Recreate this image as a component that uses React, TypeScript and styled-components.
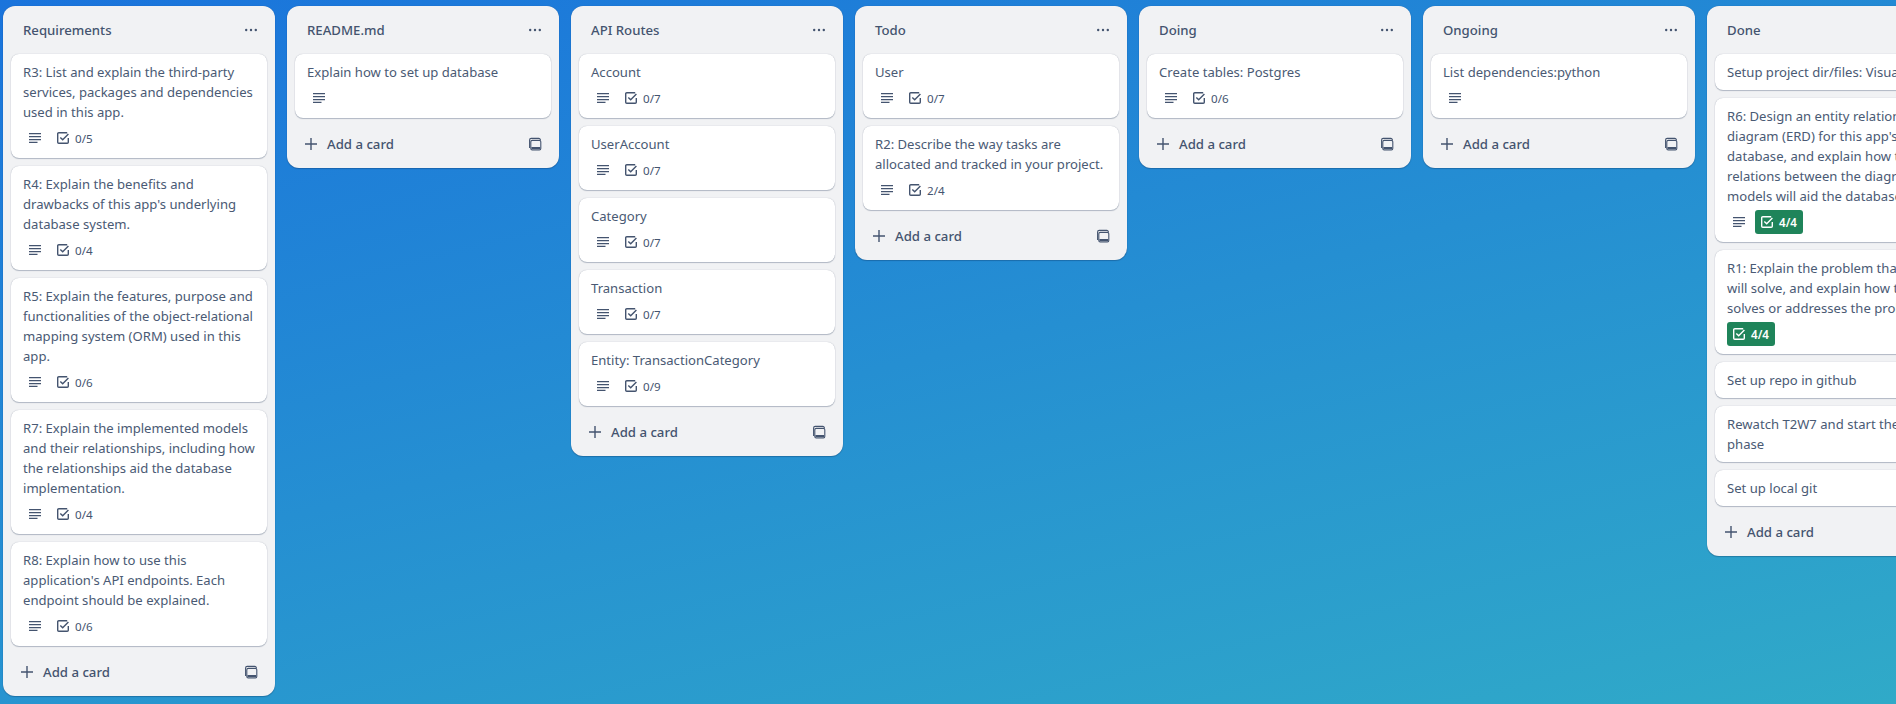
import React from 'react'
import styled, { createGlobalStyle } from 'styled-components'

const GlobalStyle = createGlobalStyle`
  html, body {
    margin: 0;
    height: 100%;
    overflow: hidden;
  }
  body {
    font-family: "Noto Sans", "Open Sans", sans-serif;
    font-size: 14px;
    color: #44546f;
  }
`

type CardData = {
  title: string
  desc?: boolean
  check?: string
}

type ListData = {
  name: string
  cards: CardData[]
}

const lists: ListData[] = [
  {
    name: 'Requirements',
    cards: [
      { title: 'R3: List and explain the third-party services, packages and dependencies used in this app.', desc: true, check: '0/5' },
      { title: "R4: Explain the benefits and drawbacks of this app's underlying database system.", desc: true, check: '0/4' },
      { title: 'R5: Explain the features, purpose and functionalities of the object-relational mapping system (ORM) used in this app.', desc: true, check: '0/6' },
      { title: 'R7: Explain the implemented models and their relationships, including how the relationships aid the database implementation.', desc: true, check: '0/4' },
      { title: "R8: Explain how to use this application's API endpoints. Each endpoint should be explained.", desc: true, check: '0/6' },
    ],
  },
  {
    name: 'README.md',
    cards: [{ title: 'Explain how to set up database', desc: true }],
  },
  {
    name: 'API Routes',
    cards: [
      { title: 'Account', desc: true, check: '0/7' },
      { title: 'UserAccount', desc: true, check: '0/7' },
      { title: 'Category', desc: true, check: '0/7' },
      { title: 'Transaction', desc: true, check: '0/7' },
      { title: 'Entity: TransactionCategory', desc: true, check: '0/9' },
    ],
  },
  {
    name: 'Todo',
    cards: [
      { title: 'User', desc: true, check: '0/7' },
      { title: 'R2: Describe the way tasks are allocated and tracked in your project.', desc: true, check: '2/4' },
    ],
  },
  {
    name: 'Doing',
    cards: [{ title: 'Create tables: Postgres', desc: true, check: '0/6' }],
  },
  {
    name: 'Ongoing',
    cards: [{ title: 'List dependencies:python', desc: true }],
  },
  {
    name: 'Done',
    cards: [
      { title: 'Setup project dir/files: Visual Code' },
      { title: "R6: Design an entity relationship diagram (ERD) for this app's database, and explain how the relations between the diagrammed models will aid the database design.", desc: true, check: '4/4' },
      { title: 'R1: Explain the problem that this app will solve, and explain how this app solves or addresses the problem.', check: '4/4' },
      { title: 'Set up repo in github' },
      { title: 'Rewatch T2W7 and start the coding phase' },
      { title: 'Set up local git' },
    ],
  },
]

const DescIcon = () => (
  <svg width="16" height="16" viewBox="0 0 16 16" fill="none" stroke="currentColor" strokeWidth="1.3">
    <path d="M2 3.6h12M2 6.6h12M2 9.6h12M2 12.4h8.5" />
  </svg>
)

const CheckIcon = () => (
  <svg width="16" height="16" viewBox="0 0 16 16" fill="none" stroke="currentColor" strokeWidth="1.4">
    <path d="M13.3 8v4.2a1.1 1.1 0 0 1-1.1 1.1H3.8a1.1 1.1 0 0 1-1.1-1.1V3.8a1.1 1.1 0 0 1 1.1-1.1h8.4" />
    <path d="M5.3 7.4 7.7 9.8 13.4 4" />
  </svg>
)

const DotsIcon = () => (
  <svg width="16" height="16" viewBox="0 0 16 16" fill="currentColor">
    <circle cx="3.2" cy="8" r="1.2" />
    <circle cx="8" cy="8" r="1.2" />
    <circle cx="12.8" cy="8" r="1.2" />
  </svg>
)

const PlusIcon = () => (
  <svg width="16" height="16" viewBox="0 0 16 16" fill="none" stroke="currentColor" strokeWidth="1.4">
    <path d="M8 2v12M2 8h12" />
  </svg>
)

const TemplateIcon = () => (
  <svg width="16" height="16" viewBox="0 0 16 16" fill="none" stroke="currentColor" strokeWidth="1.1">
    <path d="M2.6 12V4a1.6 1.6 0 0 1 1.6-1.6h7.6A1.6 1.6 0 0 1 13.4 4" />
    <rect x="3.8" y="4.4" width="10" height="9.6" rx="1.4" />
    <rect x="4.4" y="11" width="8.8" height="2.4" fill="currentColor" stroke="none" />
  </svg>
)

export default function App() {
  return (
    <>
      <GlobalStyle />
      <Board>
        {lists.map((list) => (
          <List key={list.name}>
            <ListHeader>
              <ListName>{list.name}</ListName>
              <MenuButton>
                <DotsIcon />
              </MenuButton>
            </ListHeader>
            <Cards>
              {list.cards.map((card) => {
                const complete = card.check === '4/4'
                return (
                  <Card key={card.title}>
                    <CardTitle>{card.title}</CardTitle>
                    {(card.desc || card.check) && (
                      <Badges>
                        {card.desc && (
                          <DescBadge>
                            <DescIcon />
                          </DescBadge>
                        )}
                        {card.check && (
                          <CheckBadge $complete={complete}>
                            <CheckIcon />
                            <span>{card.check}</span>
                          </CheckBadge>
                        )}
                      </Badges>
                    )}
                  </Card>
                )
              })}
            </Cards>
            <ListFooter>
              <AddCard>
                <PlusIcon />
                <span>Add a card</span>
              </AddCard>
              <TemplateButton>
                <TemplateIcon />
              </TemplateButton>
            </ListFooter>
          </List>
        ))}
      </Board>
    </>
  )
}

const Board = styled.div`
  box-sizing: border-box;
  display: flex;
  align-items: flex-start;
  gap: 12px;
  width: 1896px;
  height: 704px;
  padding: 6px 0 0 3px;
  overflow: hidden;
  background: linear-gradient(166deg, #1a74dc 0%, #30aac8 100%);
`

const List = styled.div`
  flex: 0 0 272px;
  width: 272px;
  background: #f1f2f4;
  border-radius: 12px;
  box-shadow: 0 1px 1px #091e4240, 0 0 1px #091e424f;
`

const ListHeader = styled.div`
  box-sizing: border-box;
  display: flex;
  align-items: center;
  justify-content: space-between;
  height: 48px;
  padding: 0 16px 0 20px;
`

const ListName = styled.div`
  font-size: 13.2px;
  font-weight: 500;
  line-height: 20px;
  color: #44546f;
`

const MenuButton = styled.div`
  display: flex;
  color: #44546f;
`

const Cards = styled.div`
  display: flex;
  flex-direction: column;
  gap: 8px;
  padding: 0 8px;
`

const Card = styled.div`
  box-sizing: border-box;
  padding: 8px 12px;
  background: #fff;
  border-radius: 8px;
  box-shadow: 0 1px 1px #091e4240, 0 0 1px #091e424f;
`

const CardTitle = styled.div`
  font-size: 13.1px;
  line-height: 20px;
  color: #4a5a74;
`

const Badges = styled.div`
  display: flex;
  gap: 4px;
  margin-top: 4px;
  height: 24px;
`

const DescBadge = styled.div`
  display: flex;
  align-items: center;
  justify-content: center;
  width: 24px;
  height: 24px;
  color: #44546f;
`

const CheckBadge = styled.div<{ $complete?: boolean }>`
  display: flex;
  align-items: center;
  height: 24px;
  padding: 0 4px;
  border-radius: 3px;
  font-size: 11.6px;
  font-weight: ${(p) => (p.$complete ? 600 : 400)};
  color: ${(p) => (p.$complete ? '#fff' : '#44546f')};
  background: ${(p) => (p.$complete ? '#1f845a' : 'transparent')};

  span {
    padding: 0 2px 0 4px;
  }
`

const ListFooter = styled.div`
  display: flex;
  align-items: center;
  justify-content: space-between;
  padding: 10px 8px 8px;
`

const AddCard = styled.div`
  display: flex;
  align-items: center;
  gap: 8px;
  height: 32px;
  padding: 0 8px;
  font-size: 13.2px;
  font-weight: 500;
  color: #44546f;
`

const TemplateButton = styled.div`
  display: flex;
  align-items: center;
  justify-content: center;
  width: 32px;
  height: 32px;
  color: #44546f;
`
